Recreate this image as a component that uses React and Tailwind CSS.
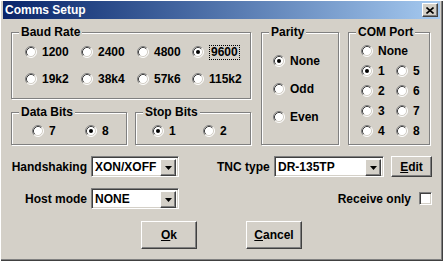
import React from "react";

const raised =
  "border-t border-l border-t-white border-l-white border-r border-b border-r-[#404040] border-b-[#404040] shadow-[inset_-1px_-1px_0_#808080]";
const sunken =
  "border-t border-l border-t-[#808080] border-l-[#808080] border-r border-b border-r-white border-b-white shadow-[inset_1px_1px_0_#404040,inset_-1px_-1px_0_#d4d0c8]";
const etched =
  "relative border border-[#808080] shadow-[inset_1px_1px_0_#fff,1px_1px_0_#fff]";

function RadioDot({ checked }) {
  return (
    <svg width="12" height="12" viewBox="0 0 12 12" className="shrink-0">
      <circle cx="6" cy="6" r="5" fill="#fff" />
      <path d="M2.11 9.89 A5.5 5.5 0 0 1 9.89 2.11" stroke="#808080" fill="none" />
      <path d="M2.82 9.18 A4.5 4.5 0 0 1 9.18 2.82" stroke="#404040" fill="none" />
      <path d="M9.89 2.11 A5.5 5.5 0 0 1 2.11 9.89" stroke="#fff" fill="none" />
      <path d="M9.18 2.82 A4.5 4.5 0 0 1 2.82 9.18" stroke="#d4d0c8" fill="none" />
      {checked && <circle cx="6" cy="6" r="2" fill="#000" />}
    </svg>
  );
}

function Radio({ label, checked, focus }) {
  return (
    <div className="flex h-[16px] items-center gap-[5px]">
      <RadioDot checked={checked} />
      <span
        className={
          focus
            ? "border border-dotted border-black px-[1px] leading-[13px]"
            : "leading-[14px]"
        }
      >
        {label}
      </span>
    </div>
  );
}

function Group({ title, className, children }) {
  return (
    <div className={`${etched} ${className}`}>
      <span className="absolute left-[7px] top-[-8px] bg-[#d4d0c8] px-[2px] leading-[14px]">
        {title}
      </span>
      {children}
    </div>
  );
}

function Select({ value, className }) {
  return (
    <div className={`${sunken} relative flex h-[21px] items-center bg-white pl-[3px] ${className}`}>
      <span className="leading-[14px]">{value}</span>
      <div
        className={`${raised} absolute right-[2px] top-[2px] flex h-[17px] w-[16px] items-center justify-center bg-[#d4d0c8]`}
      >
        <svg width="7" height="4" viewBox="0 0 7 4">
          <path d="M0 0h7L3.5 4z" fill="#000" />
        </svg>
      </div>
    </div>
  );
}

function Button({ children, className }) {
  return (
    <div className={`${raised} flex items-center justify-center bg-[#d4d0c8] ${className}`}>
      {children}
    </div>
  );
}

export default function App() {
  return (
    <div
      className="h-[261px] w-[443px] overflow-hidden bg-[#d4d0c8] text-[12px] font-bold text-black shadow-[inset_1px_1px_0_#fff,inset_-1px_-1px_0_#404040,inset_-2px_-2px_0_#808080]"
      style={{ fontFamily: "'Liberation Sans', Arial, sans-serif" }}
    >
      {/* title bar */}
      <div className="ml-[3px] mt-[1px] flex h-[18px] w-[437px] items-center justify-between bg-gradient-to-r from-[#0a246a] to-[#a6caf0] pl-[2px] pr-[2px]">
        <span className="text-[12px] leading-[14px] text-white">Comms Setup</span>
        <div className={`${raised} flex h-[14px] w-[16px] items-center justify-center bg-[#d4d0c8]`}>
          <svg width="8" height="7" viewBox="0 0 8 7">
            <path d="M0.5 0.5L7.5 6.5M7.5 0.5L0.5 6.5" stroke="#000" strokeWidth="1.6" />
          </svg>
        </div>
      </div>

      {/* groups */}
      <div className="ml-[11px] mt-[13px] flex">
        <div className="flex w-[240px] flex-col">
          <Group title="Baud Rate" className="h-[67px] w-[240px]">
            <div className="grid grid-cols-[56px_56px_55px_auto] gap-y-[11px] pl-[13px] pt-[11px]">
              <Radio label="1200" />
              <Radio label="2400" />
              <Radio label="4800" />
              <Radio label="9600" checked focus />
              <Radio label="19k2" />
              <Radio label="38k4" />
              <Radio label="57k6" />
              <Radio label="115k2" />
            </div>
          </Group>
          <div className="mt-[13px] flex gap-[8px]">
            <Group title="Data Bits" className="h-[33px] w-[116px]">
              <div className="grid grid-cols-[53px_auto] pl-[20px] pt-[10px]">
                <Radio label="7" />
                <Radio label="8" checked />
              </div>
            </Group>
            <Group title="Stop Bits" className="h-[33px] w-[116px]">
              <div className="grid grid-cols-[51px_auto] pl-[16px] pt-[10px]">
                <Radio label="1" checked />
                <Radio label="2" />
              </div>
            </Group>
          </div>
        </div>

        <Group title="Parity" className="ml-[10px] h-[113px] w-[78px]">
          <div className="flex flex-col gap-[12px] pl-[11px] pt-[20px]">
            <Radio label="None" checked />
            <Radio label="Odd" />
            <Radio label="Even" />
          </div>
        </Group>

        <Group title="COM Port" className="ml-[9px] h-[113px] w-[82px]">
          <div className="grid grid-cols-[35px_auto] gap-y-[4px] pl-[12px] pt-[10px]">
            <div className="col-span-2">
              <Radio label="None" />
            </div>
            <Radio label="1" checked />
            <Radio label="5" />
            <Radio label="2" />
            <Radio label="6" />
            <Radio label="3" />
            <Radio label="7" />
            <Radio label="4" />
            <Radio label="8" />
          </div>
        </Group>
      </div>

      {/* handshaking / tnc */}
      <div className="ml-[11px] mt-[11px] flex h-[21px] items-center">
        <span className="w-[76px] text-right">Handshaking</span>
        <Select value="XON/XOFF" className="ml-[4px] w-[88px]" />
        <span className="ml-[38px] w-[54px]">TNC type</span>
        <Select value="DR-135TP" className="ml-[3px] w-[110px]" />
        <Button className="ml-[7px] h-[21px] w-[41px]">
          <span>
            <span className="underline">E</span>dit
          </span>
        </Button>
      </div>

      {/* host mode / receive only */}
      <div className="ml-[11px] mr-[11px] mt-[11px] flex h-[21px] items-center">
        <span className="w-[76px] text-right">Host mode</span>
        <Select value="NONE" className="ml-[4px] w-[88px]" />
        <span className="ml-auto">Receive only</span>
        <div className={`${sunken} ml-[8px] h-[13px] w-[13px] bg-white`} />
      </div>

      {/* buttons */}
      <div className="mt-[12px] flex justify-center gap-[49px]">
        <Button className="h-[28px] w-[56px]">
          <span>
            <span className="underline">O</span>k
          </span>
        </Button>
        <Button className="h-[28px] w-[56px]">
          <span>
            <span className="underline">C</span>ancel
          </span>
        </Button>
      </div>
    </div>
  );
}
